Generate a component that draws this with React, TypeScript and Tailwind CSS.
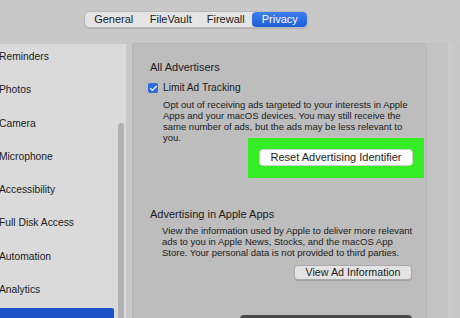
import { Check } from "lucide-react";

const SIDEBAR = [
  "Reminders",
  "Photos",
  "Camera",
  "Microphone",
  "Accessibility",
  "Full Disk Access",
  "Automation",
  "Analytics",
];

const TABS = [
  { label: "General", w: "w-[58px]" },
  { label: "FileVault", w: "w-[57px]" },
  { label: "Firewall", w: "w-[54px]" },
  { label: "Privacy", w: "w-[55px]", active: true },
];

export default function App() {
  return (
    <div
      className="w-[460px] h-[318px] overflow-hidden bg-[#c8c8c8] text-[#1b1b1b] flex flex-col"
      style={{ fontFamily: '"Liberation Sans", Arial, sans-serif' }}
    >
      {/* tab bar */}
      <div className="h-[43px] shrink-0 pt-[11px] pl-[84px]">
        <div className="flex h-[17px] w-[224px] rounded-[5px] bg-[#e4e4e4] border border-[#b9b9b9] shadow-[0_1px_1px_rgba(0,0,0,0.12)] overflow-hidden">
          {TABS.map((t) => (
            <div
              key={t.label}
              className={
                t.active
                  ? `${t.w} flex items-center justify-center text-[11px] leading-none text-white bg-gradient-to-b from-[#3d7ff0] to-[#1f5ed6] rounded-[4px]`
                  : `${t.w} flex items-center justify-center text-[11px] leading-none`
              }
            >
              {t.label}
            </div>
          ))}
        </div>
      </div>

      <div className="flex flex-1 min-h-0">
        {/* sidebar */}
        <aside className="relative w-[126px] shrink-0 mt-px bg-[#dadada] pt-[7px] overflow-hidden">
          <div className="flex flex-col gap-[21.3px] -ml-px">
            {SIDEBAR.map((s) => (
              <div key={s} className="h-[12px] leading-[12px] text-[10.3px] whitespace-nowrap">
                {s}
              </div>
            ))}
          </div>
          <div className="mt-[12px] w-[114px] h-[30px] bg-[#1f52c8] rounded-tr-[2px]" />
          <div className="absolute left-[118px] top-[79px] w-[6px] h-[260px] rounded-full bg-[#b2b2b2]" />
        </aside>

        {/* main panel */}
        <main className="ml-[6px] w-[295px] shrink-0 bg-[#bdbdbd] border-t border-l border-r border-[#b4b4b4] rounded-t-[3px] pl-[17px] pt-[17px]">
          <p className="text-[11px] leading-[13px]">All Advertisers</p>

          <div className="mt-[8px] h-[12px] flex items-center -ml-[2px]">
            <div className="w-[10px] h-[10px] rounded-[2px] bg-[#2d6ddb] flex items-center justify-center">
              <Check size={9} color="#ffffff" strokeWidth={3} />
            </div>
            <span className="ml-[5px] text-[10.2px] leading-none">Limit Ad Tracking</span>
          </div>

          <div className="mt-[5px] ml-[13px] text-[9.5px] leading-[11px] whitespace-nowrap">
            <p>Opt out of receiving ads targeted to your interests in Apple</p>
            <p>Apps and your macOS devices. You may still receive the</p>
            <p>same number of ads, but the ads may be less relevant to</p>
            <p>you.</p>
          </div>

          <div className="-mt-[5px] ml-[98px] w-[176px] h-[40px] bg-[#36ec24] pt-[11px] pl-[11px]">
            <div className="w-[154px] h-[17px] rounded-[4px] bg-white border border-[#d0d0d0] flex items-center justify-center text-[11px] leading-none whitespace-nowrap">
              Reset Advertising Identifier
            </div>
          </div>

          <p className="mt-[30px] text-[11px] leading-[13px]">Advertising in Apple Apps</p>
          <div className="mt-[4px] ml-[12px] text-[9.5px] leading-[11px] whitespace-nowrap">
            <p>View the information used by Apple to deliver more relevant</p>
            <p>ads to you in Apple News, Stocks, and the macOS App</p>
            <p>Store. Your personal data is not provided to third parties.</p>
          </div>

          <div className="mt-[7px] ml-[144px] w-[118px] h-[15px] rounded-[4px] bg-[#e3e3e3] border border-[#aaaaaa] shadow-[0_1px_1px_rgba(0,0,0,0.15)] flex items-center justify-center text-[10.7px] leading-none whitespace-nowrap">
            View Ad Information
          </div>

          <div className="mt-[35px] ml-[90px] w-[172px] h-[4px] rounded-t-[4px] bg-[#4a4a4a]" />
        </main>

        {/* window edge */}
        <div className="w-[21px] shrink-0 bg-[#c3c3c3]" />
        <div className="flex-1 bg-gradient-to-r from-[#cbcbcb] to-[#c6c6c6]" />
      </div>
    </div>
  );
}
